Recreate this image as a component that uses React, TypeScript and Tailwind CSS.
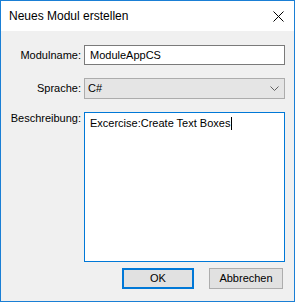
import React from 'react';

export default function App() {
  return (
    <div
      className="w-[295px] h-[302px] border border-[#1a7fd5] bg-[#f0f0f0] flex flex-col text-black"
      style={{ fontFamily: '"Liberation Sans", Arial, sans-serif' }}
    >
      <div className="h-[30px] bg-white flex items-center justify-between pl-[8px] pr-[10px]">
        <span className="text-[12px] leading-[14px]">Neues Modul erstellen</span>
        <svg width="11" height="11" viewBox="0 0 11 11">
          <path d="M0.5 0.5 L10.5 10.5 M10.5 0.5 L0.5 10.5" stroke="#000" strokeWidth="1" />
        </svg>
      </div>

      <div className="flex-1 pt-[14px] text-[11px] leading-[13px]">
        <div className="flex items-center">
          <label className="w-[80px] text-right">Modulname:</label>
          <div className="ml-[3px] w-[201px] h-[20px] border border-[#7a7a7a] bg-white flex items-center pl-[5px]">
            ModuleAppCS
          </div>
        </div>

        <div className="flex items-center mt-[13px]">
          <label className="w-[80px] text-right">Sprache:</label>
          <div className="ml-[3px] w-[201px] h-[21px] border border-[#acacac] bg-[#e5e5e5] flex items-center justify-between pl-[3px] pr-[5px]">
            <span>C#</span>
            <svg width="9" height="5" viewBox="0 0 9 5">
              <path d="M0.5 0.5 L4.5 4.5 L8.5 0.5" stroke="#606060" strokeWidth="1" fill="none" />
            </svg>
          </div>
        </div>

        <div className="flex items-start mt-[13px]">
          <label className="w-[80px] text-right">Beschreibung:</label>
          <div className="ml-[3px] w-[201px] h-[150px] border border-[#0078d7] bg-white pl-[5px] pt-[4px] flex items-start">
            <span>Excercise:Create Text Boxes</span>
            <span className="w-px h-[13px] bg-black ml-px" />
          </div>
        </div>

        <div className="flex justify-end mt-[6px] pr-[11px] gap-[15px]">
          <button className="w-[72px] h-[21px] border-2 border-[#0078d7] bg-[#e1e1e1] text-[11px]">
            OK
          </button>
          <button className="w-[74px] h-[21px] border border-[#adadad] bg-[#e1e1e1] text-[11px]">
            Abbrechen
          </button>
        </div>
      </div>
    </div>
  );
}
